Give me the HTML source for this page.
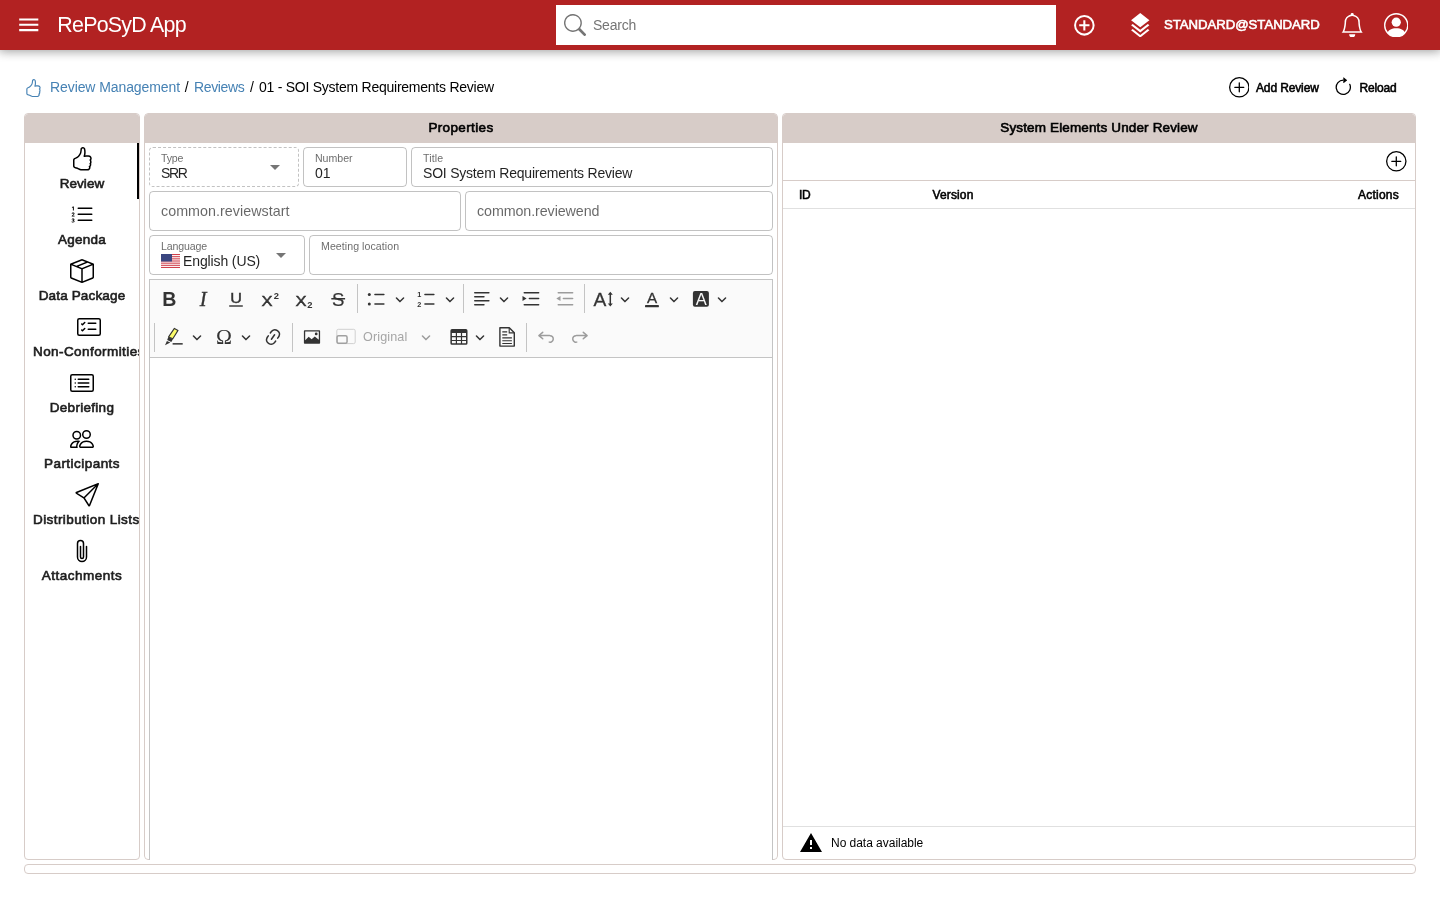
<!DOCTYPE html>
<html lang="en">
<head>
<meta charset="utf-8">
<title>RePoSyD App</title>
<style>
*{box-sizing:border-box;margin:0;padding:0}
html,body{width:1440px;height:900px;overflow:hidden;background:#fff}
body{will-change:transform}
body{font-family:"Liberation Sans",sans-serif;font-size:14px;color:#000;position:relative;line-height:1.5}
svg{display:block}
.abs{position:absolute}
/* header */
#hdr{position:absolute;left:0;top:0;width:1440px;height:50px;background:#b22222;color:#fff;box-shadow:0 0 10px 2px rgba(0,0,0,.2),0 0 10px rgba(0,0,0,.24);z-index:5}
#hdr svg{fill:#fff}
#title{position:absolute;left:57.3px;top:10.4px;font-size:21.4px;line-height:30px;letter-spacing:-.74px;white-space:nowrap}
#search{position:absolute;left:556px;top:5px;width:500px;height:40px;background:#fff;color:#757575}
#search svg{fill:#757575;position:absolute;left:8px;top:9px}
#search span{position:absolute;left:37px;top:0;line-height:40px;font-size:14px}
#user{position:absolute;left:1164px;top:0;line-height:49px;-webkit-text-stroke:.6px;font-size:13.2px;letter-spacing:-.27px;white-space:nowrap}
/* breadcrumb */
#crumb{position:absolute;left:50px;top:76px;line-height:22px;font-size:14px;white-space:nowrap}
#crumb a,#crumb span{position:absolute;top:0}
#crumb a{color:#4682b4;text-decoration:none}
.tbtn{position:absolute;top:76.8px;line-height:22px;font-size:12px;-webkit-text-stroke:.55px;white-space:nowrap}
/* cards */
.card{position:absolute;border:1px solid #d7ccc8;border-radius:4px;background:#fff;overflow:hidden}
#props{overflow:visible;clip-path:inset(0 round 4px)}
.card .hd{border-radius:3px 3px 0 0;height:29px;background:#d7ccc8;text-align:center;-webkit-text-stroke:.62px;font-size:13.5px;line-height:27.6px}
/* nav */
.tab{position:absolute;left:0;width:114px;height:56px;text-align:center}
.tab svg{position:absolute;left:45px;top:4px;width:24px;height:24px}
.tab span{position:absolute;left:8px;right:-10px;top:28.7px;line-height:24px;font-size:13.5px;-webkit-text-stroke:.62px;white-space:nowrap;text-align:left;color:#1d1d1d}
.tab span.c{left:0;right:0;text-align:center}
/* fields */
.fld{position:absolute;height:40px;border:1px solid rgba(0,0,0,.24);border-radius:4px}
.fld .lb{position:absolute;left:11px;top:2px;font-size:10.6px;line-height:16px;color:rgba(0,0,0,.6);white-space:nowrap}
.fld .vl{position:absolute;left:11px;top:14.5px;font-size:14px;line-height:20px;color:rgba(0,0,0,.87);white-space:nowrap}
.fld .ph{position:absolute;left:11px;top:0;font-size:14.3px;line-height:38px;color:rgba(0,0,0,.6);white-space:nowrap}
.fld svg.dd{position:absolute;right:11px;top:7px;width:24px;height:24px;fill:rgba(0,0,0,.54)}

.fld svg.flag{position:absolute;left:11px;top:18px}
#cktb{position:absolute;width:624px;height:79px;border:1px solid #c4c4c4;background:#fafafa}
#cktb svg.ci{position:absolute;fill:#333}
#cktb svg.dis{fill:#9c9c9c}
#cktb svg text{font-family:"Liberation Sans",sans-serif}
#cktb .sp{position:absolute;width:1px;height:29px;background:#c4c4c4}
#cktb .orig{position:absolute;font-size:12.6px;line-height:20px;color:#a6a6a6;white-space:nowrap}
#cked{position:absolute;width:624px;height:600px;border:1px solid #c4c4c4;background:#fff}

#right .ln{position:absolute;left:0;width:632px;height:1px;background:rgba(0,0,0,.12)}
#right .th{position:absolute;font-size:12px;-webkit-text-stroke:.55px;line-height:26px;white-space:nowrap}
#right .nd{position:absolute;font-size:12px;line-height:32px;white-space:nowrap}
</style>
</head>
<body>
<header id="hdr">
  <svg class="abs" style="left:16px;top:12px" width="25.5" height="25.5" viewBox="0 0 24 24"><path d="M3 6h18v2H3zm0 5h18v2H3zm0 5h18v2H3z"/></svg>
  <div id="title">RePoSyD App</div>
  <div id="search">
    <svg width="22" height="22" viewBox="0 0 16 16"><path d="M11.742 10.344a6.500 6.500 0 1 0-1.397 1.398h-.001c.03.040.062.078.098.115l3.850 3.850a1 1 0 0 0 1.415-1.414l-3.850-3.850a1.007 1.007 0 0 0-.115-.100zM12 6.500a5.500 5.500 0 1 1-11 0 5.500 5.500 0 0 1 11 0z"/></svg>
    <span style="letter-spacing:-0.23px">Search</span>
  </div>
  <svg class="abs" style="left:1072px;top:12.6px" width="24.7" height="24.7" viewBox="0 0 24 24"><path d="M12 20c-4.41 0-8-3.59-8-8s3.590-8 8-8 8 3.590 8 8-3.590 8-8 8m0-18A10 10 0 0 0 2 12a10 10 0 0 0 10 10 10 10 0 0 0 10-10A10 10 0 0 0 12 2m1 5h-2v4H7v2h4v4h2v-4h4v-2h-4z"/></svg>
  <svg class="abs" style="left:1128px;top:12.8px" width="24.5" height="24.5" viewBox="0 0 24 24"><path d="M12 0 3 7l1.630 1.270L12 14l7.360-5.730L21 7zm7.370 10.730L12 16.470l-7.380-5.730L3 12l9 7 9-7zm0 5L12 21.470l-7.380-5.730L3 17l9 7 9-7z"/></svg>
  <div id="user" style="letter-spacing:-0.04px">STANDARD@STANDARD</div>
  <svg class="abs" style="left:1339.6px;top:12.8px" width="24.4" height="24.4" viewBox="0 0 16 16"><path d="M8 16a2 2 0 0 0 2-2H6a2 2 0 0 0 2 2zM8 1.918l-.797.161A4.002 4.002 0 0 0 4 6c0 .628-.134 2.197-.459 3.742-.160.767-.376 1.566-.663 2.258h10.244c-.287-.692-.502-1.490-.663-2.258C12.134 8.197 12 6.628 12 6a4.002 4.002 0 0 0-3.203-3.920L8 1.917zM14.220 12c.223.447.481.801.780 1H1c.299-.199.557-.553.780-1C2.680 10.200 3 6.880 3 6c0-2.420 1.720-4.440 4.005-4.901a1 1 0 1 1 1.990 0A5.002 5.002 0 0 1 13 6c0 .880.320 4.200 1.220 6z"/></svg>
  <svg class="abs" style="left:1383.8px;top:12.8px" width="24.5" height="24.5" viewBox="0 0 16 16"><path d="M11 6a3 3 0 1 1-6 0 3 3 0 0 1 6 0z"/><path fill-rule="evenodd" d="M0 8a8 8 0 1 1 16 0A8 8 0 0 1 0 8zm8-7a7 7 0 0 0-5.468 11.370C3.242 11.226 4.805 10 8 10s4.757 1.225 5.468 2.370A7 7 0 0 0 8 1z"/></svg>
</header>

<!-- breadcrumb row -->
<svg class="abs" style="left:23.6px;top:78.6px;fill:#4682b4" width="18.4" height="18.4" viewBox="0 0 16 16"><use href="#i-thumb"/></svg>
<div id="crumb"><a style="left:0;letter-spacing:-.09px">Review Management</a><span style="left:134.8px">/</span><a style="left:144px;letter-spacing:-.35px">Reviews</a><span style="left:200px">/</span><span style="left:209px;letter-spacing:-.25px">01 - SOI System Requirements Review</span></div>
<svg class="abs" style="left:1228.7px;top:77px" width="20.6" height="20.6" viewBox="0 0 16 16"><use href="#i-plus"/></svg>
<div class="tbtn" style="left:1256px;letter-spacing:-0.13px">Add Review</div>
<svg class="abs" style="left:1333.4px;top:77px" width="20.6" height="20.6" viewBox="0 0 16 16"><path fill-rule="evenodd" d="M8 3a5 5 0 1 0 4.546 2.914.5.5 0 0 1 .908-.417A6 6 0 1 1 8 2v1z"/><path d="M8 4.466V.534a.250.250 0 0 1 .410-.192l2.360 1.966c.120.100.120.284 0 .384L8.410 4.658A.250.250 0 0 1 8 4.466z"/></svg>
<div class="tbtn" style="left:1359.5px;letter-spacing:-0.15px">Reload</div>

<svg width="0" height="0" style="position:absolute">
<defs>
<g id="i-thumb"><path d="M8.864.046C7.908-.193 7.020.530 6.956 1.466c-.072 1.051-.230 2.016-.428 2.590-.125.360-.479 1.013-1.040 1.639-.557.623-1.282 1.178-2.131 1.410C2.685 7.288 2 7.870 2 8.720v4.001c0 .845.682 1.464 1.448 1.545 1.070.114 1.564.415 2.068.723l.048.030c.272.165.578.348.970.484.397.136.861.217 1.466.217h3.500c.937 0 1.599-.477 1.934-1.064a1.860 1.860 0 0 0 .254-.912c0-.152-.023-.312-.077-.464.201-.263.380-.578.488-.901.110-.330.172-.762.004-1.149.069-.130.120-.269.159-.403.077-.270.113-.568.113-.857 0-.288-.036-.585-.113-.856a2.144 2.144 0 0 0-.138-.362 1.900 1.900 0 0 0 .234-1.734c-.206-.592-.682-1.100-1.200-1.272-.847-.282-1.803-.276-2.516-.211a9.840 9.840 0 0 0-.443.050 9.365 9.365 0 0 0-.062-4.509A1.380 1.380 0 0 0 9.125.111L8.864.046zM11.500 14.721H8c-.510 0-.863-.069-1.140-.164-.281-.097-.506-.228-.776-.393l-.040-.024c-.555-.339-1.198-.731-2.490-.868-.333-.036-.554-.290-.554-.550V8.720c0-.254.226-.543.620-.650 1.095-.300 1.977-.996 2.614-1.708.635-.710 1.064-1.475 1.238-1.978.243-.700.407-1.768.482-2.850.025-.362.360-.594.667-.518l.262.066c.160.040.258.143.288.255a8.340 8.340 0 0 1-.145 4.725.5.5 0 0 0 .595.644l.003-.001.014-.003.058-.014a8.908 8.908 0 0 1 1.036-.157c.663-.060 1.457-.054 2.110.164.175.058.450.300.570.650.107.308.087.670-.266 1.022l-.353.353.353.354c.043.043.105.141.154.315.048.167.075.370.075.581 0 .212-.027.414-.075.582-.050.174-.111.272-.154.315l-.353.353.353.354c.047.047.109.177.005.488a2.224 2.224 0 0 1-.505.805l-.353.353.353.354c.006.005.041.050.041.170a.866.866 0 0 1-.121.416c-.165.288-.503.560-1.066.560z"/></g>
<g id="i-plus"><path d="M8 15A7 7 0 1 1 8 1a7 7 0 0 1 0 14zm0 1A8 8 0 1 0 8 0a8 8 0 0 0 0 16z"/><path d="M8 4a.5.5 0 0 1 .5.500v3h3a.5.5 0 0 1 0 1h-3v3a.5.5 0 0 1-1 0v-3h-3a.5.5 0 0 1 0-1h3v-3A.5.5 0 0 1 8 4z"/></g>
<path id="i-chev" d="M.941 4.523a.75.750 0 1 1 1.060-1.060l3.006 3.005 3.005-3.005a.75.750 0 1 1 1.060 1.060l-3.549 3.550a.75.750 0 0 1-1.168-.136L.941 4.523z"/>
<g id="i-listol"><path fill-rule="evenodd" d="M5 11.500a.5.5 0 0 1 .5-.5h9a.5.5 0 0 1 0 1h-9a.5.5 0 0 1-.5-.5zm0-4a.5.5 0 0 1 .5-.5h9a.5.5 0 0 1 0 1h-9a.5.5 0 0 1-.5-.5zm0-4a.5.5 0 0 1 .5-.5h9a.5.5 0 0 1 0 1h-9a.5.5 0 0 1-.5-.5z"/><path d="M1.713 11.865v-.474H2c.217 0 .363-.137.363-.317 0-.185-.158-.310-.361-.310-.223 0-.367.152-.373.310h-.590c.016-.467.373-.787.986-.787.588-.002.954.291.957.703a.595.595 0 0 1-.492.594v.033a.615.615 0 0 1 .569.631c.003.533-.502.800-1.051.800-.656 0-1-.370-1.008-.794h.582c.008.178.186.306.422.309.254 0 .424-.145.422-.350-.002-.195-.155-.348-.414-.348h-.300zm-.004-4.699h-.604v-.035c0-.408.295-.844.958-.844.583 0 .960.326.960.756 0 .389-.257.617-.476.848l-.537.572v.030h1.054V9H1.143v-.395l.957-.990c.138-.142.293-.304.293-.508 0-.180-.147-.320-.342-.320a.330.330 0 0 0-.342.338v.041zM2.564 5h-.635V2.924h-.031l-.598.420v-.567l.629-.443h.635V5z"/></g>
<g id="i-box"><path d="M8.186 1.113a.5.5 0 0 0-.372 0L1.846 3.500l2.404.961L10.404 2l-2.218-.887zm3.564 1.426L5.596 5 8 5.961 14.154 3.500l-2.404-.961zm3.250 1.700-6.500 2.600v7.922l6.500-2.600V4.240zM7.500 14.762V6.838L1 4.239v7.923l6.500 2.600zM7.443.184a1.500 1.500 0 0 1 1.114 0l7.129 2.852A.5.5 0 0 1 16 3.500v8.662a1 1 0 0 1-.629.928l-7.185 2.874a.5.5 0 0 1-.372 0L.630 13.090a1 1 0 0 1-.630-.928V3.500a.5.5 0 0 1 .314-.464L7.443.184z"/></g>
<path id="i-cardframe" d="M14.500 3a.5.5 0 0 1 .5.5v9a.5.5 0 0 1-.5.5h-13a.5.5 0 0 1-.5-.5v-9a.5.5 0 0 1 .5-.5h13zm-13-1A1.500 1.500 0 0 0 0 3.500v9A1.500 1.500 0 0 0 1.500 14h13a1.500 1.500 0 0 0 1.500-1.500v-9A1.500 1.500 0 0 0 14.500 2h-13z"/>
<g id="i-cardcheck"><use href="#i-cardframe"/><path d="M7 5.500a.5.5 0 0 1 .5-.5h5a.5.5 0 0 1 0 1h-5a.5.5 0 0 1-.5-.5zm-1.496-.854a.5.5 0 0 1 0 .708l-1.500 1.500a.5.5 0 0 1-.708 0l-.5-.5a.5.5 0 1 1 .708-.708l.146.147 1.146-1.147a.5.5 0 0 1 .708 0zM7 9.500a.5.5 0 0 1 .5-.5h5a.5.5 0 0 1 0 1h-5a.5.5 0 0 1-.5-.5zm-1.496-.854a.5.5 0 0 1 0 .708l-1.500 1.500a.5.5 0 0 1-.708 0l-.5-.5a.5.5 0 0 1 .708-.708l.146.147 1.146-1.147a.5.5 0 0 1 .708 0z"/></g>
<g id="i-cardlist"><use href="#i-cardframe"/><path d="M5 8a.5.5 0 0 1 .5-.5h7a.5.5 0 0 1 0 1h-7A.5.5 0 0 1 5 8zm0-2.500a.5.5 0 0 1 .5-.5h7a.5.5 0 0 1 0 1h-7a.5.5 0 0 1-.5-.5zm0 5a.5.5 0 0 1 .5-.5h7a.5.5 0 0 1 0 1h-7a.5.5 0 0 1-.5-.5zm-1-5a.5.5 0 1 1-1 0 .5.5 0 0 1 1 0zM4 8a.5.5 0 1 1-1 0 .5.5 0 0 1 1 0zm0 2.500a.5.5 0 1 1-1 0 .5.5 0 0 1 1 0z"/></g>
<g id="i-people"><path d="M15 14s1 0 1-1-1-4-5-4-5 3-5 4 1 1 1 1h8zm-7.978-1A.261.261 0 0 1 7 12.996c.001-.264.167-1.030.760-1.720C8.312 10.629 9.282 10 11 10c1.717 0 2.687.630 3.240 1.276.593.690.758 1.457.760 1.720l-.008.002a.274.274 0 0 1-.014.002H7.022zM11 7a2 2 0 1 0 0-4 2 2 0 0 0 0 4zm3-2a3 3 0 1 1-6 0 3 3 0 0 1 6 0zM6.936 9.280a5.880 5.880 0 0 0-1.230-.247A7.350 7.350 0 0 0 5 9c-4 0-5 3-5 4 0 .667.333 1 1 1h4.216A2.238 2.238 0 0 1 5 13c0-1.010.377-2.042 1.090-2.904.243-.294.526-.569.846-.816zM4.920 10A5.493 5.493 0 0 0 4 13H1c0-.260.164-1.030.760-1.724.545-.636 1.492-1.256 3.160-1.275zM1.500 5.500a3 3 0 1 1 6 0 3 3 0 0 1-6 0zm3-2a2 2 0 1 0 0 4 2 2 0 0 0 0-4z"/></g>
<g id="i-send"><path d="M15.854.146a.5.5 0 0 1 .110.540l-5.819 14.547a.750.750 0 0 1-1.329.124l-3.178-4.995L.643 7.184a.750.750 0 0 1 .124-1.330L15.314.037a.5.5 0 0 1 .540.110ZM6.636 10.070l2.761 4.338L14.130 2.576 6.636 10.070Zm6.787-8.201L1.591 6.602l4.339 2.760 7.494-7.493Z"/></g>
<g id="i-clip"><path d="M4.500 3a2.500 2.500 0 0 1 5 0v9a1.500 1.500 0 0 1-3 0V5a.5.5 0 0 1 1 0v7a.5.5 0 0 0 1 0V3a1.500 1.500 0 1 0-3 0v9a2.500 2.500 0 0 0 5 0V5a.5.5 0 0 1 1 0v7a3.500 3.500 0 1 1-7 0V3z"/></g>
</defs>
</svg>

<!-- NAV CARD -->
<nav class="card" id="nav" style="left:24px;top:113px;width:116px;height:747px">
  <div class="hd"></div>
  <div class="tab" style="top:29px"><svg viewBox="0 0 16 16"><use href="#i-thumb"/></svg><span class="c" style="letter-spacing:0.05px">Review</span></div>
  <div class="tab" style="top:85px"><svg viewBox="0 0 16 16"><use href="#i-listol"/></svg><span class="c" style="letter-spacing:0.25px">Agenda</span></div>
  <div class="tab" style="top:141px"><svg viewBox="0 0 16 16"><use href="#i-box"/></svg><span class="c" style="letter-spacing:0.15px">Data Package</span></div>
  <div class="tab" style="top:197px"><svg style="left:52px" viewBox="0 0 16 16"><use href="#i-cardcheck"/></svg><span style="letter-spacing:0.42px">Non-Conformities</span></div>
  <div class="tab" style="top:253px"><svg viewBox="0 0 16 16"><use href="#i-cardlist"/></svg><span class="c" style="letter-spacing:0.29px">Debriefing</span></div>
  <div class="tab" style="top:309px"><svg viewBox="0 0 16 16"><use href="#i-people"/></svg><span class="c" style="letter-spacing:0.46px">Participants</span></div>
  <div class="tab" style="top:365px"><svg style="left:49.500px" viewBox="0 0 16 16"><use href="#i-send"/></svg><span style="letter-spacing:0.42px">Distribution Lists</span></div>
  <div class="tab" style="top:421px"><svg viewBox="0 0 16 16"><use href="#i-clip"/></svg><span class="c" style="letter-spacing:0.5px">Attachments</span></div>
  <div style="position:absolute;left:112px;top:29px;width:2px;height:56px;background:#000"></div>
</nav>

<!-- PROPERTIES CARD -->
<div class="card" id="props" style="left:144px;top:113px;width:634px;height:747px">
  <div class="hd" style="letter-spacing:0.37px">Properties</div>
  <div class="fld" style="left:4px;top:33px;width:150px;border-style:dashed"><span class="lb" style="letter-spacing:-0.16px">Type</span><span class="vl" style="letter-spacing:-1.33px">SRR</span><svg class="dd" viewBox="0 0 24 24"><path d="m7 10 5 5 5-5z"/></svg></div>
  <div class="fld" style="left:158px;top:33px;width:104px;"><span class="lb" style="letter-spacing:-0.03px">Number</span><span class="vl" style="letter-spacing:0.08px">01</span></div>
  <div class="fld" style="left:266px;top:33px;width:362px;"><span class="lb" style="letter-spacing:0.15px">Title</span><span class="vl" style="letter-spacing:-0.21px">SOI System Requirements Review</span></div>
  <div class="fld" style="left:4px;top:77px;width:312px;"><span class="ph" style="letter-spacing:0.03px">common.reviewstart</span></div>
  <div class="fld" style="left:320px;top:77px;width:308px;"><span class="ph" style="letter-spacing:-0.1px">common.reviewend</span></div>
  <div class="fld" style="left:4px;top:121px;width:156px;"><span class="lb" style="letter-spacing:-0.14px">Language</span><svg class="flag" width="19" height="14" viewBox="0 0 19 14"><rect width="19" height="14" fill="#fff"/><g fill="#d0404c"><rect y="0" width="19" height="1.08"/><rect y="2.15" width="19" height="1.08"/><rect y="4.31" width="19" height="1.08"/><rect y="6.46" width="19" height="1.08"/><rect y="8.62" width="19" height="1.08"/><rect y="10.77" width="19" height="1.08"/><rect y="12.92" width="19" height="1.08"/></g><rect width="11" height="7.5" fill="#3a4680"/></svg><span class="vl" style="left:33px;letter-spacing:-.12px">English (US)</span><svg class="dd" viewBox="0 0 24 24"><path d="m7 10 5 5 5-5z"/></svg></div>
  <div class="fld" style="left:164px;top:121px;width:464px;"><span class="lb" style="letter-spacing:0.06px">Meeting location</span></div>
  <div id="cktb" style="left:4px;top:165px">
    <svg class="ci" style="left:8.5px;top:9.0px" width="20" height="20" viewBox="0 0 20 20"><text x="10.4" y="16.7" text-anchor="middle" font-weight="bold" font-size="19.6">B</text></svg>
    <svg class="ci" style="left:42.5px;top:9.0px" width="20" height="20" viewBox="0 0 20 20"><text x="10.2" y="16.7" text-anchor="middle" style="font-family:'Liberation Serif',serif;font-style:italic" font-size="20.4" stroke="#333" stroke-width=".35">I</text></svg>
    <svg class="ci" style="left:76.0px;top:9.0px" width="20" height="20" viewBox="0 0 20 20"><text transform="translate(10.15 13.9) scale(1.1 1)" text-anchor="middle" font-size="14.7" stroke="#333" stroke-width=".4">U</text><rect x="3.2" y="16.3" width="13.6" height="1.4"/></svg>
    <svg class="ci" style="left:110.0px;top:9.0px" width="20" height="20" viewBox="0 0 20 20"><text transform="translate(7 16.7) scale(1.12 1)" text-anchor="middle" font-size="14.8" stroke="#333" stroke-width=".45">X</text><text x="16.4" y="9.8" text-anchor="middle" font-size="9.4" font-weight="bold">2</text></svg>
    <svg class="ci" style="left:144.0px;top:9.0px" width="20" height="20" viewBox="0 0 20 20"><text transform="translate(7 16.7) scale(1.12 1)" text-anchor="middle" font-size="14.8" stroke="#333" stroke-width=".45">X</text><text x="15.8" y="18.8" text-anchor="middle" font-size="9.4" font-weight="bold">2</text></svg>
    <svg class="ci" style="left:178.0px;top:9.0px" width="20" height="20" viewBox="0 0 20 20"><text x="10.15" y="16.5" text-anchor="middle" font-size="18.6" stroke="#333" stroke-width=".2">S</text><rect x="3.3" y="9" width="13.8" height="1.5"/></svg>
    <i class="sp" style="left:207.0px;top:4.3px"></i>
    <svg class="ci" style="left:216.3px;top:9.0px" width="20" height="20" viewBox="0 0 20 20"><circle cx="3.3" cy="5.6" r="1.5"/><circle cx="3.3" cy="14.9" r="1.5"/><rect x="8.2" y="4.85" width="10.4" height="1.5" rx=".75"/><rect x="8.2" y="14.15" width="10.4" height="1.5" rx=".75"/></svg>
    <svg class="ci" style="left:245.0px;top:14.0px" width="10" height="10" viewBox="0 0 10 10"><use href="#i-chev"/></svg>
    <svg class="ci" style="left:266.0px;top:9.0px" width="20" height="20" viewBox="0 0 20 20"><text x="3.4" y="8" text-anchor="middle" font-size="7.3" font-weight="bold">1</text><text x="3.2" y="18.1" text-anchor="middle" font-size="7.3" font-weight="bold">2</text><rect x="8.2" y="4.85" width="10.4" height="1.5" rx=".75"/><rect x="8.2" y="14.15" width="10.4" height="1.5" rx=".75"/></svg>
    <svg class="ci" style="left:294.7px;top:14.0px" width="10" height="10" viewBox="0 0 10 10"><use href="#i-chev"/></svg>
    <i class="sp" style="left:313.0px;top:4.3px"></i>
    <svg class="ci" style="left:322.0px;top:9.0px" width="20" height="20" viewBox="0 0 20 20"><rect x="2" y="3.05" width="15.6" height="1.5" rx=".75"/><rect x="2" y="6.95" width="10.7" height="1.5" rx=".75"/><rect x="2" y="11.05" width="15.6" height="1.5" rx=".75"/><rect x="2" y="14.95" width="10.7" height="1.5" rx=".75"/></svg>
    <svg class="ci" style="left:348.8px;top:14.0px" width="10" height="10" viewBox="0 0 10 10"><use href="#i-chev"/></svg>
    <svg class="ci" style="left:370.5px;top:9.0px" width="20" height="20" viewBox="0 0 20 20"><rect x="2.5" y="3.05" width="15.9" height="1.5" rx=".75"/><rect x="7.6" y="8.85" width="10.8" height="1.5" rx=".75"/><rect x="2.5" y="14.95" width="15.9" height="1.5" rx=".75"/><path d="M1.500 7.100 5.600 9.600 1.500 12.100z"/></svg>
    <svg class="ci dis" style="left:404.5px;top:9.0px" width="20" height="20" viewBox="0 0 20 20"><rect x="2.5" y="3.05" width="15.9" height="1.5" rx=".75"/><rect x="7.6" y="8.85" width="10.8" height="1.5" rx=".75"/><rect x="2.5" y="14.95" width="15.9" height="1.5" rx=".75"/><path d="M5.500 7.100 1.300 9.600 5.500 12.100z"/></svg>
    <i class="sp" style="left:434.1px;top:4.3px"></i>
    <svg class="ci" style="left:443.0px;top:9.0px" width="20" height="20" viewBox="0 0 20 20"><text x="6.95" y="16.7" text-anchor="middle" font-size="19.2" stroke="#333" stroke-width=".3">A</text><rect x="16.55" y="4.6" width="1.5" height="11"/><path d="M14.800 5.800 17.300 2.800 19.800 5.800zM14.800 14.400 17.300 17.400 19.800 14.400z"/></svg>
    <svg class="ci" style="left:470.1px;top:14.0px" width="10" height="10" viewBox="0 0 10 10"><use href="#i-chev"/></svg>
    <svg class="ci" style="left:492.0px;top:9.0px" width="20" height="20" viewBox="0 0 20 20"><text x="10.1" y="13.900" text-anchor="middle" font-size="15.2" stroke="#333" stroke-width=".3">A</text><rect x="3" y="16" width="13.9" height="2.2" rx=".4"/></svg>
    <svg class="ci" style="left:519.0px;top:14.0px" width="10" height="10" viewBox="0 0 10 10"><use href="#i-chev"/></svg>
    <svg class="ci" style="left:541.0px;top:9.0px" width="20" height="20" viewBox="0 0 20 20"><rect x="1.9" y="2.1" width="16" height="15.700" rx="2"/><text x="10.2" y="16" text-anchor="middle" font-size="16.500" fill="#fafafa">A</text></svg>
    <svg class="ci" style="left:567.0px;top:14.0px" width="10" height="10" viewBox="0 0 10 10"><use href="#i-chev"/></svg>
    <i class="sp" style="left:4.1px;top:42.5px"></i>
    <svg class="ci" style="left:14.3px;top:47.3px" width="20" height="20" viewBox="0 0 20 20"><path d="M10.400 1.400 14 3.400 8.800 11.800 4.600 9.900z" fill="#fbfb6a" stroke="#333" stroke-width="1.100" stroke-linejoin="round"/><path d="M4.300 10 8.900 12.200 7.300 15 3.200 13.100zM2.900 14 6.300 15.600 1 18.300z"/><rect x="8.600" y="16.100" width="10.100" height="1.500"/></svg>
    <svg class="ci" style="left:42.0px;top:51.8px" width="10" height="10" viewBox="0 0 10 10"><use href="#i-chev"/></svg>
    <svg class="ci" style="left:64.0px;top:47.3px" width="20" height="20" viewBox="0 0 20 20"><text x="10" y="16.800" text-anchor="middle" style="font-family:'Liberation Serif',serif" font-size="21.500">Ω</text></svg>
    <svg class="ci" style="left:90.8px;top:51.8px" width="10" height="10" viewBox="0 0 10 10"><use href="#i-chev"/></svg>
    <svg class="ci" style="left:113.1px;top:46.8px" width="20" height="20" viewBox="0 0 20 20"><path d="m11.077 15 .991-1.416a.75.75 0 1 1 1.229.860l-1.148 1.640a.748.748 0 0 1-.217.206 5.251 5.251 0 0 1-8.503-5.955.741.741 0 0 1 .120-.274l1.147-1.639a.75.75 0 1 1 1.228.860L4.933 10.700l.006.003a3.750 3.750 0 0 0 6.132 4.294l.006.004zm5.494-5.335a.748.748 0 0 1-.120.274l-1.147 1.639a.75.75 0 1 1-1.228-.860l.860-1.230a3.750 3.750 0 0 0-6.144-4.301l-.860 1.229a.75.75 0 0 1-1.229-.860l1.148-1.640a.748.748 0 0 1 .217-.206 5.251 5.251 0 0 1 8.503 5.955zm-4.563-2.532a.75.75 0 0 1 .184 1.045l-3.155 4.505a.75.750 0 1 1-1.229-.860l3.155-4.506a.75.75 0 0 1 1.045-.184z"/></svg>
    <i class="sp" style="left:141.9px;top:42.5px"></i>
    <svg class="ci" style="left:152.0px;top:47.0px" width="20" height="20" viewBox="0 0 20 20"><path fill-rule="evenodd" d="M2.700 3.200h14.600a.8.8 0 0 1 .8.800v11.900a.8.8 0 0 1-.8.800H2.700a.8.8 0 0 1-.8-.800V4a.8.8 0 0 1 .8-.800zM3.200 4.600v8.600l3.500-3.500 2.900 2.600 3.200-2.800 4 3.300V4.600zM14.200 5.500a1.400 1.400 0 1 1 0 2.800 1.400 1.400 0 0 1 0-2.800z"/></svg>
    <svg class="ci raw" style="left:186.0px;top:47.3px" width="20" height="20" viewBox="0 0 20 20"><rect x=".8" y="2.300" width="18.400" height="14.300" rx="1.500" fill="none" stroke="#d0d0d0" stroke-width="1"/><rect x="1.050" y="8.850" width="10" height="7.500" rx="1.500" fill="none" stroke="#a0a0a0" stroke-width="1.500"/></svg>
    <span class="orig" style="left:213px;top:47.3px;letter-spacing:0.12px">Original</span>
    <svg class="ci dis" style="left:270.8px;top:51.8px" width="10" height="10" viewBox="0 0 10 10"><use href="#i-chev"/></svg>
    <svg class="ci" style="left:299.0px;top:47.3px" width="20" height="20" viewBox="0 0 20 20"><path fill-rule="evenodd" d="M3 2.100h13.900a1.600 1.600 0 0 1 1.600 1.600v12.500a1.600 1.600 0 0 1-1.600 1.600H3a1.600 1.600 0 0 1-1.600-1.600V3.700A1.600 1.600 0 0 1 3 2.100zM2.900 6.100v2.900h3.900V6.100zm5.100 0v2.900h3.900V6.100zm5.100 0v2.900H17V6.100zM2.900 10.200v2.700h3.900v-2.700zm5.100 0v2.700h3.900v-2.700zm5.100 0v2.700H17v-2.700zM2.900 14.100v2.200h3.900v-2.200zm5.100 0v2.200h3.900v-2.200zm5.100 0v2.200H17v-2.200z"/></svg>
    <svg class="ci" style="left:325.0px;top:51.8px" width="10" height="10" viewBox="0 0 10 10"><use href="#i-chev"/></svg>
    <svg class="ci" style="left:347.0px;top:47.0px" width="20" height="20" viewBox="0 0 20 20"><path fill="none" stroke="#333" stroke-width="1.400" stroke-linejoin="round" d="M2.900 .7h9.400l5 5v13.400H2.900z"/><path fill="none" stroke="#333" stroke-width="1.100" d="M12.200 .900v5h5"/><path d="M5.300 4.300h4.900v1.100H5.300zM5.300 7.300h4.900v1.100H5.300zM5.300 10.300h9.600v1.100H5.300zM5.300 13.200h9.600v1.100H5.300zM5.300 16h9.600v1.100H5.300z"/></svg>
    <i class="sp" style="left:376.0px;top:42.5px"></i>
    <svg class="ci dis" style="left:386.0px;top:47.3px" width="20" height="20" viewBox="0 0 20 20"><path d="M5.042 9.367l2.189 1.837a.750.750 0 0 1-.965 1.149l-3.788-3.180a.747.747 0 0 1-.210-.284.750.750 0 0 1 .170-.945L6.230 4.762a.750.750 0 1 1 .964 1.150L4.863 7.866h8.917A.750.750 0 0 1 14 7.900a4 4 0 1 1-1.477 7.718l.344-1.489a2.500 2.500 0 1 0 1.094-4.730l.008-.032H5.042z"/></svg>
    <svg class="ci dis" style="left:420.0px;top:47.3px" width="20" height="20" viewBox="0 0 20 20"><g transform="translate(20 0) scale(-1 1)"><path d="M5.042 9.367l2.189 1.837a.750.750 0 0 1-.965 1.149l-3.788-3.180a.747.747 0 0 1-.210-.284.750.750 0 0 1 .170-.945L6.230 4.762a.750.750 0 1 1 .964 1.150L4.863 7.866h8.917A.750.750 0 0 1 14 7.900a4 4 0 1 1-1.477 7.718l.344-1.489a2.500 2.500 0 1 0 1.094-4.730l.008-.032H5.042z"/></g></svg>
  </div>
  <div id="cked" style="left:4px;top:243px"></div>
</div>

<!-- RIGHT CARD -->
<div class="card" id="right" style="left:782px;top:113px;width:634px;height:747px">
  <div class="hd" style="letter-spacing:0.14px">System Elements Under Review</div>
  <svg class="abs" style="left:603.2px;top:37.200px" width="20.6" height="20.6" viewBox="0 0 16 16"><use href="#i-plus"/></svg>
  <div class="ln" style="top:66px;background:#d7ccc8"></div>
  <div class="th" style="left:16px;top:68px;letter-spacing:-0.39px">ID</div>
  <div class="th" style="left:149.500px;top:68px;letter-spacing:0.13px">Version</div>
  <div class="th" style="right:16px;top:68px;letter-spacing:0.24px">Actions</div>
  <div class="ln" style="top:94px"></div>
  <div class="ln" style="top:712px"></div>
  <svg class="abs" style="left:16px;top:717px" width="24" height="24" viewBox="0 0 24 24"><path d="M13 14h-2V9h2m0 9h-2v-2h2M1 21h22L12 2z"/></svg>
  <div class="nd" style="left:48px;top:713px;letter-spacing:-0.03px">No data available</div>
</div>

<div class="card" style="left:24px;top:864px;width:1392px;height:10px"></div>
</body>
</html>
